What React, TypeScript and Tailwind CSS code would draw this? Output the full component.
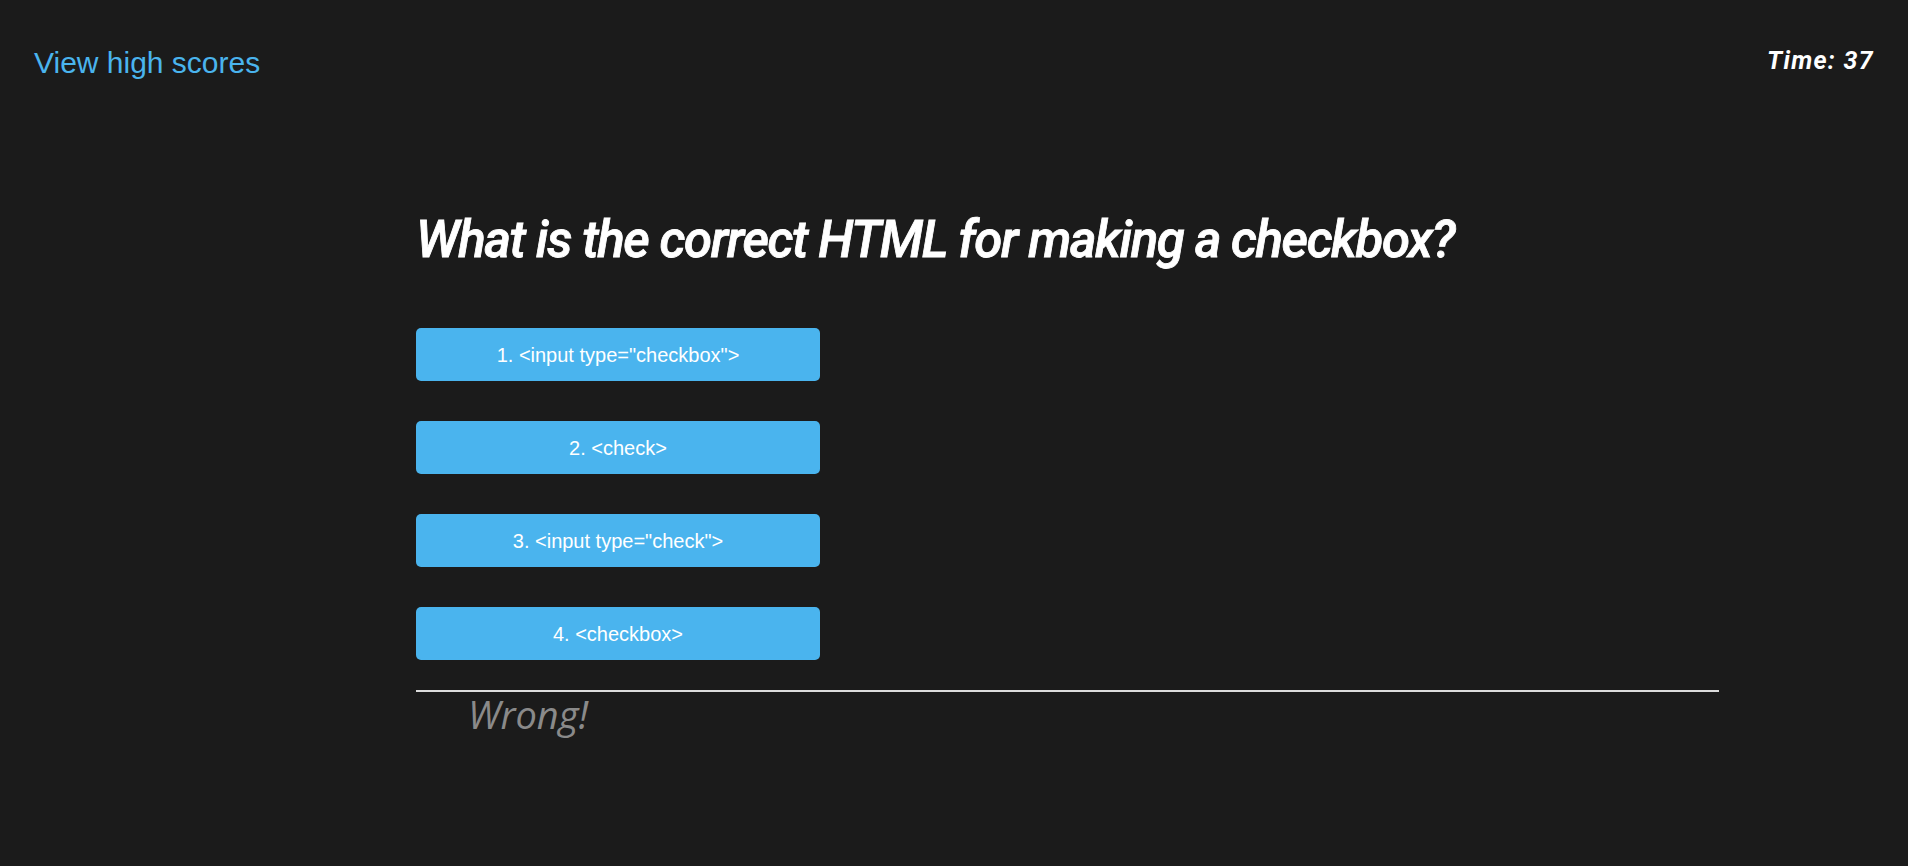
import React from "react";

const answers = [
  '1. <input type="checkbox">',
  "2. <check>",
  '3. <input type="check">',
  "4. <checkbox>",
];

export default function App() {
  return (
    <div className="w-full h-[866px] bg-[#1b1b1b] overflow-hidden">
      <header className="flex justify-between items-start pl-[34px] pr-[34px] pt-[46px]">
        <a
          href="#"
          className="text-[30px] leading-[34px] text-[#4ab4ee] [font-family:'Liberation_Sans',Arial,sans-serif]"
        >
          View high scores
        </a>
        <div className="text-[25px] leading-[28px] mt-[1px] font-bold italic tracking-[1.3px] text-white [font-family:Roboto,sans-serif]">
          Time: 37
        </div>
      </header>
      <main className="ml-[416px] w-[1303px] mt-[134px]">
        <h1 className="text-[51px] leading-[51px] font-medium italic tracking-[-1.4px] text-white [-webkit-text-stroke:0.8px_white] [font-family:Roboto,sans-serif]">
          What is the correct HTML for making a checkbox?
        </h1>
        <div className="flex flex-col gap-[40px] mt-[63px]">
          {answers.map((a) => (
            <button
              key={a}
              className="w-[404px] h-[53px] rounded-[5px] bg-[#4ab4ee] text-white text-[20px] [font-family:'Liberation_Sans',Arial,sans-serif]"
            >
              {a}
            </button>
          ))}
        </div>
        <div className="mt-[30px] h-[2px] bg-[#dcdcdc]" />
        <div className="pl-[52px] mt-[1px] text-[38px] leading-[42px] italic text-[#8a8a8a] [font-family:'Open_Sans',sans-serif]">
          Wrong!
        </div>
      </main>
    </div>
  );
}
